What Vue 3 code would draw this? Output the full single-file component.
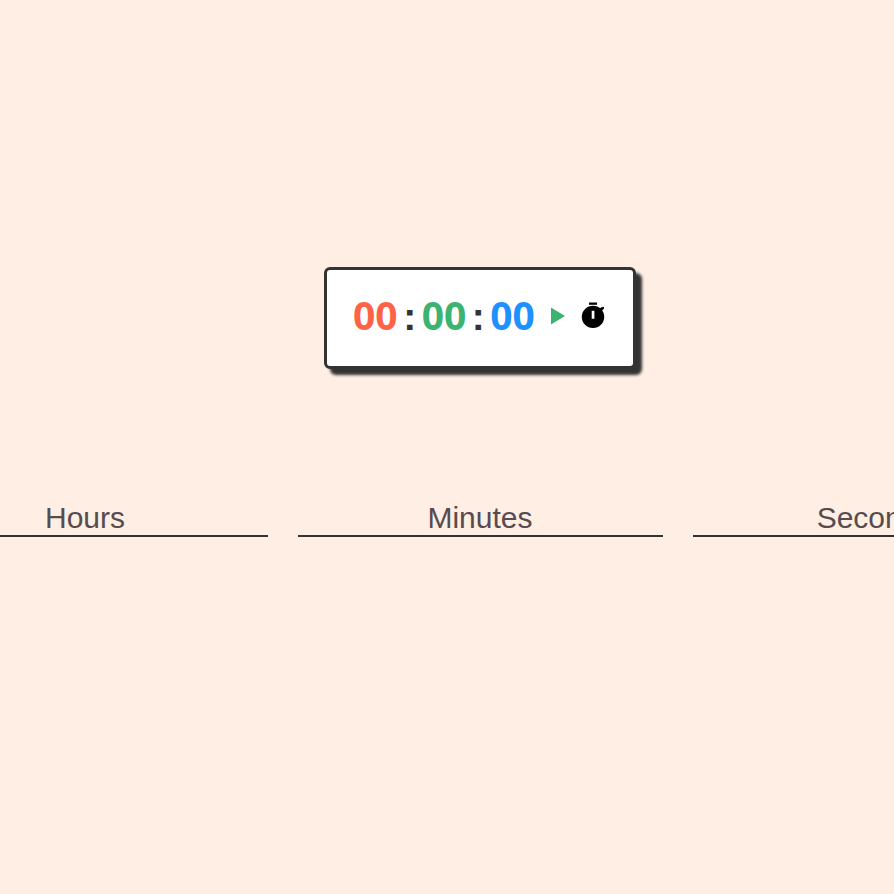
<script setup>
import { ref, computed, onUnmounted } from 'vue'

const fields = [
  { key: 'hours', label: 'Hours' },
  { key: 'minutes', label: 'Minutes' },
  { key: 'seconds', label: 'Seconds' },
]
const entries = ref({ hours: '', minutes: '', seconds: '' })
const remaining = ref(0)
let ticker = null

const pad = (n) => String(n).padStart(2, '0')
const hours = computed(() => pad(Math.floor(remaining.value / 3600)))
const minutes = computed(() => pad(Math.floor(remaining.value / 60) % 60))
const seconds = computed(() => pad(remaining.value % 60))

function start() {
  clearInterval(ticker)
  ticker = setInterval(() => {
    if (remaining.value > 0) remaining.value -= 1
    else clearInterval(ticker)
  }, 1000)
}

function setTimer() {
  const { hours: h, minutes: m, seconds: s } = entries.value
  remaining.value = (Number(h) || 0) * 3600 + (Number(m) || 0) * 60 + (Number(s) || 0)
}

onUnmounted(() => clearInterval(ticker))
</script>

<template>
  <main class="page">
    <section class="card">
      <div class="clock">
        <span class="hours">{{ hours }}</span>
        <span class="separator">:</span>
        <span class="minutes">{{ minutes }}</span>
        <span class="separator">:</span>
        <span class="seconds">{{ seconds }}</span>
      </div>
      <button class="control" type="button" aria-label="Start" @click="start">
        <svg width="14" height="18" viewBox="0 0 14 18"><path d="M0 0.5 14 9 0 17.5Z" fill="#3cb371" /></svg>
      </button>
      <button class="control" type="button" aria-label="Set timer" @click="setTimer">
        <svg width="24" height="28" viewBox="0 0 24 28">
          <path d="M8 0.5h8v2.3H8z" />
          <path fill-rule="evenodd" d="M12 3.7A11.2 11.2 0 1 1 12 26.1 11.2 11.2 0 0 1 12 3.7ZM10.7 8.8v8h2.7v-8Z" />
          <path d="M18.3 7l2.7-2.2 .8.5 1.2-.6v1.8l-2.2 2.5z" />
        </svg>
      </button>
    </section>
    <form class="fields" @submit.prevent="setTimer">
      <input
        v-for="field in fields"
        :key="field.key"
        v-model="entries[field.key]"
        class="field"
        type="text"
        inputmode="numeric"
        :placeholder="field.label"
        :aria-label="field.label"
      />
    </form>
  </main>
</template>

<style>
body {
  background: #feeee3;
}
</style>

<style scoped>
.page {
  box-sizing: border-box;
  display: flex;
  flex-direction: column;
  align-items: center;
  gap: 128px;
  min-height: 100vh;
  padding: 267px 0 0 66px;
  overflow: hidden;
  font-family: "Liberation Sans", Arial, sans-serif;
  color: #333;
}

.card {
  display: flex;
  align-items: center;
  gap: 16px;
  padding: 23px 28px 27px 26px;
  background: #fff;
  border: 3px solid #333;
  border-radius: 6px;
  box-shadow: 6px 6px 3px #333;
}

.clock {
  display: flex;
  align-items: baseline;
  gap: 5px;
  height: 46px;
  font-family: "Noto Sans", Roboto, sans-serif;
  font-size: 39px;
  font-weight: 700;
  line-height: 44px;
}

.separator {
  width: 14px;
  font-family: "Liberation Sans", Arial, sans-serif;
  text-align: center;
}

.hours {
  color: tomato;
}

.minutes {
  color: mediumseagreen;
}

.seconds {
  color: dodgerblue;
}

.control {
  display: flex;
  padding: 0;
  background: none;
  border: 0;
  cursor: pointer;
}

.fields {
  display: flex;
  gap: 30px;
}

.field {
  box-sizing: border-box;
  flex: none;
  width: 365px;
  height: 40px;
  padding: 3px 0 0;
  background: transparent;
  border: 0;
  border-bottom: 2px solid #333;
  border-radius: 0;
  outline: 0;
  font-family: inherit;
  font-size: 30px;
  text-align: center;
  color: #333;
}

.field::placeholder {
  color: #574b4f;
  opacity: 1;
}
</style>
